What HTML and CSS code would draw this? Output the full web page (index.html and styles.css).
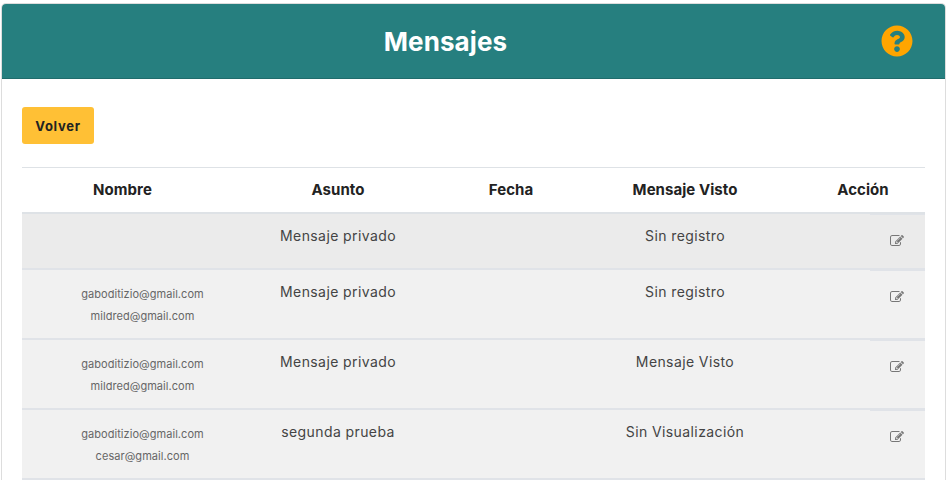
FILE: index.html
```html
<!DOCTYPE html>
<html lang="es">
<head>
  <meta charset="UTF-8" />
  <meta name="viewport" content="width=device-width, initial-scale=1" />
  <title>Mensajes</title>
  <link rel="stylesheet" href="styles.css">
</head>
<body>

  <div class="card">
    <div class="card-header">
      <h2>Mensajes</h2>
      <a class="help" href="#" aria-label="Ayuda">
        <svg viewBox="0 0 512 512" width="32" height="32"><path fill="#ffa500" d="M504 256c0 136.997-111.043 248-248 248S8 392.997 8 256C8 119.083 119.043 8 256 8s248 111.083 248 248zM262.655 90c-54.497 0-89.255 22.957-116.549 63.758-3.536 5.286-2.353 12.415 2.715 16.258l34.699 26.31c5.205 3.947 12.621 3.008 16.665-2.122 17.864-22.658 30.113-35.797 57.303-35.797 20.429 0 45.698 13.148 45.698 32.958 0 14.976-12.363 22.667-32.534 33.976C247.128 238.528 216 254.941 216 296v4c0 6.627 5.373 12 12 12h56c6.627 0 12-5.373 12-12v-1.333c0-28.462 83.186-29.647 83.186-106.667 0-58.002-60.165-102-116.531-102zM256 338c-25.365 0-46 20.635-46 46 0 25.364 20.635 46 46 46s46-20.636 46-46c0-25.365-20.635-46-46-46z"/></svg>
      </a>
    </div>

    <div class="card-body">
      <button class="btn-volver">Volver</button>

      <table class="messages">
        <colgroup>
          <col class="col-nombre">
          <col class="col-asunto">
          <col class="col-fecha">
          <col class="col-visto">
          <col class="col-gap">
          <col class="col-icon">
        </colgroup>
        <thead>
          <tr>
            <th>Nombre</th>
            <th>Asunto</th>
            <th>Fecha</th>
            <th>Mensaje Visto</th>
            <th colspan="2">Acción</th>
          </tr>
        </thead>
        <tbody>
          <tr class="row-first">
            <td></td>
            <td><p>Mensaje privado</p></td>
            <td></td>
            <td><p>Sin registro</p></td>
            <td></td>
            <td class="action"><svg class="edit" viewBox="0 128 1792 1408"><use href="#icon-edit"/></svg></td>
          </tr>
          <tr>
            <td class="mails"><div>gaboditizio@gmail.com</div><div>mildred@gmail.com</div></td>
            <td><p>Mensaje privado</p></td>
            <td></td>
            <td><p>Sin registro</p></td>
            <td></td>
            <td class="action"><svg class="edit" viewBox="0 128 1792 1408"><use href="#icon-edit"/></svg></td>
          </tr>
          <tr>
            <td class="mails"><div>gaboditizio@gmail.com</div><div>mildred@gmail.com</div></td>
            <td><p>Mensaje privado</p></td>
            <td></td>
            <td><p>Mensaje Visto</p></td>
            <td></td>
            <td class="action"><svg class="edit" viewBox="0 128 1792 1408"><use href="#icon-edit"/></svg></td>
          </tr>
          <tr>
            <td class="mails"><div>gaboditizio@gmail.com</div><div>cesar@gmail.com</div></td>
            <td><p>segunda prueba</p></td>
            <td></td>
            <td><p>Sin Visualización</p></td>
            <td></td>
            <td class="action"><svg class="edit" viewBox="0 128 1792 1408"><use href="#icon-edit"/></svg></td>
          </tr>
        </tbody>
      </table>
    </div>
  </div>

  <svg class="sprites" width="0" height="0">
    <defs>
      <path id="icon-edit" fill="currentColor" d="M888 1184l116-116-152-152-116 116v56h96v96h56zm440-720q-16-16-33 1l-350 350q-17 17-1 33t33-1l350-350q17-17 1-33zm80 594v190q0 119-84.5 203.5t-203.5 84.5h-832q-119 0-203.5-84.5t-84.5-203.5v-832q0-119 84.5-203.5t203.5-84.5h832q63 0 117 25 15 7 18 23 3 17-9 29l-49 49q-14 14-32 8-23-6-45-6h-832q-66 0-113 47t-47 113v832q0 66 47 113t113 47h832q66 0 113-47t47-113v-126q0-13 9-22l64-64q15-15 35-7t20 29zm-96-738l288 288-672 672h-288v-288zm444 132l-92 92-288-288 92-92q28-28 68-28t68 28l152 152q28 28 28 68t-28 68z"/>
    </defs>
  </svg>

</body>
</html>
```

FILE: styles.css
```css
html, body {
  height: 480px;
  overflow: hidden;
}
body {
  margin: 0;
  padding: 3px 2px 0 1px;
  font-family: Inter, "Open Sans", sans-serif;
  font-size: 14px;
  color: #444;
  background: #fff;
}
.card {
  border: 1px solid #ddd;
  border-bottom: none;
  border-radius: 5px 5px 0 0;
}
.card-header {
  position: relative;
  height: 75px;
  padding-right: 56px;
  background: #267f7f;
  border-bottom: 1px solid #206c6c;
  border-radius: 4px 4px 0 0;
  box-sizing: border-box;
  display: flex;
  align-items: center;
  justify-content: center;
}
.card-header h2 {
  margin: 0;
  font-size: 26px;
  font-weight: 700;
  letter-spacing: 0.1px;
  color: #fff;
}
.help {
  position: absolute;
  right: 32px;
  top: 21px;
  height: 32px;
}
.card-body {
  padding: 28px 20px 0;
}
.btn-volver {
  display: block;
  width: 72px;
  height: 37px;
  padding: 1px 0 0;
  margin-bottom: 23px;
  background: #ffc035;
  color: #222;
  border: none;
  border-radius: 3px;
  font-family: inherit;
  font-size: 13px;
  font-weight: 700;
  letter-spacing: 0.7px;
}
.messages {
  width: 903px;
  table-layout: fixed;
  border-collapse: separate;
  border-spacing: 0;
}
.col-nombre { width: 201px; }
.col-asunto { width: 230px; }
.col-fecha { width: 116px; }
.col-visto { width: 232px; }
.col-gap { width: 69px; }
.col-icon { width: 55px; }
th {
  height: 47px;
  padding: 0 0 1px;
  font-size: 15px;
  font-weight: 700;
  letter-spacing: 0.05px;
  color: #222;
  border-top: 1px solid #dee2e6;
  border-bottom: 2px solid #dee2e6;
  box-sizing: border-box;
}
td {
  padding: 11px 0 12px;
  text-align: center;
  vertical-align: top;
  background: #f1f1f1;
  border-bottom: 2px solid #e0e3e8;
}
td p {
  margin: 0 0 10px;
  line-height: 21px;
  letter-spacing: 0.4px;
}
.row-first td {
  background: #ebebeb;
}
td.mails {
  padding: 13px 0 11px 40px;
  font-size: 11px;
  line-height: 22px;
  letter-spacing: 0.05px;
  color: #666;
}
td.action {
  padding: 14px 1px 10px 0;
  line-height: 21px;
  color: #777;
  box-shadow: inset 0 1px 0 #e0e3e8;
}
.edit {
  width: 14px;
  height: 11px;
  vertical-align: -2px;
}
.sprites {
  position: absolute;
}
```
